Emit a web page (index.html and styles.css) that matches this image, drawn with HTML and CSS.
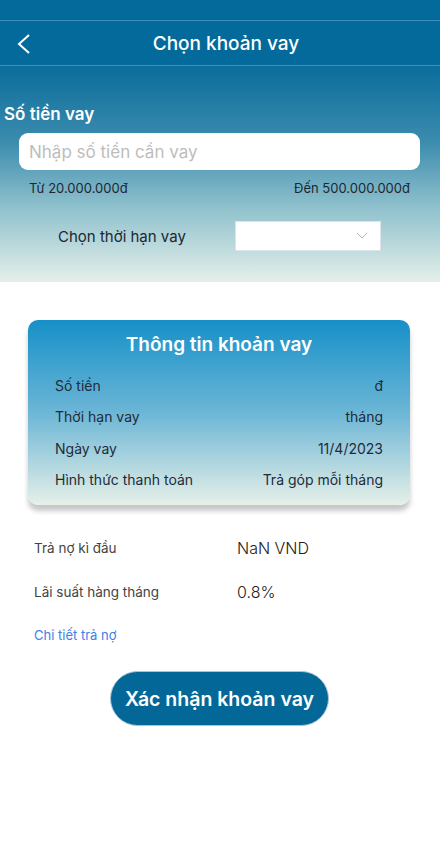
FILE: index.html
```html
<html>
  <head>
    <meta charset="utf-8">
    <link rel="stylesheet" href="styles.css">
  </head>
  <body>
    <div class="status"></div>
    <div class="header">
      <span class="back">
        <svg width="16" height="22" viewBox="0 0 16 22">
          <path d="M13 2 L3 11 L13 20" fill="none" stroke="#fff" stroke-width="2" />
        </svg>
      </span>
      <span class="title">Chọn khoản vay</span>
      <span></span>
    </div>

    <div class="top">
      <div class="label-amount">Số tiền vay</div>
      <input class="amount" type="text" placeholder="Nhập số tiền cần vay" />
      <div class="range">
        <span>Từ 20.000.000đ</span>
        <span>Đến 500.000.000đ</span>
      </div>
      <div class="term">
        <span class="term-label">Chọn thời hạn vay</span>
        <div class="term-select">
          <svg width="12" height="8" viewBox="0 0 12 8">
            <path d="M1 1 L6 6 L11 1" fill="none" stroke="#b8b8b8" stroke-width="1" />
          </svg>
        </div>
      </div>
    </div>

    <div class="card">
      <div class="card-title">Thông tin khoản vay</div>
      <div class="card-row"><span>Số tiền</span><span>đ</span></div>
      <div class="card-row"><span>Thời hạn vay</span><span>tháng</span></div>
      <div class="card-row"><span>Ngày vay</span><span>11/4/2023</span></div>
      <div class="card-row"><span>Hình thức thanh toán</span><span>Trả góp mỗi tháng</span></div>
    </div>

    <div class="summary">
      <div class="sum-row">
        <span class="sum-label">Trả nợ kì đầu</span>
        <span class="sum-value">NaN VND</span>
      </div>
      <div class="sum-row">
        <span class="sum-label">Lãi suất hàng tháng</span>
        <span class="sum-value">0.8%</span>
      </div>
      <a class="detail-link">Chi tiết trả nợ</a>
    </div>

    <div class="actions">
      <button class="confirm">Xác nhận khoản vay</button>
    </div>
  </body>
</html>
```

FILE: styles.css
```css
body {
  margin: 0;
  font-family: Inter, "Noto Sans", sans-serif;
  background: #ffffff;
  color: #222;
}

.status {
  height: 20px;
  background: #036a9b;
  border-bottom: 1px solid #3f8fbc;
}

.header {
  display: grid;
  grid-template-columns: 50px 1fr 50px;
  align-items: center;
  height: 44px;
  background: #036a9b;
  border-bottom: 1px solid #3f8fbc;
}
.back {
  display: flex;
  padding-left: 16px;
  padding-top: 2px;
}
.title {
  text-align: center;
  color: #fff;
  font-size: 19px;
  font-weight: 500;
  padding-left: 12px;
}

.top {
  height: 216px;
  box-sizing: border-box;
  padding-top: 37px;
  background: linear-gradient(180deg, #0b6c9b 0%, #3b8cae 35%, #8ec0cc 65%, #e4f0ea 100%);
}
.label-amount {
  padding-left: 4px;
  color: #fff;
  font-size: 17px;
  font-weight: 600;
  line-height: 22px;
}
.amount {
  display: block;
  box-sizing: border-box;
  margin: 8px 20px 0 19px;
  width: 401px;
  height: 37px;
  padding: 0 10px;
  border: none;
  border-radius: 9px;
  background: #fff;
  font-family: Inter, "Noto Sans", sans-serif;
  font-size: 17px;
  outline: none;
}
.amount::placeholder {
  color: #bdbdbd;
}
.range {
  display: flex;
  justify-content: space-between;
  padding: 0 30px 0 29px;
  margin-top: 10px;
  font-size: 13px;
  line-height: 16px;
  color: #1c2733;
}
.term {
  display: flex;
  align-items: center;
  margin-top: 25px;
  padding-left: 58px;
}
.term-label {
  width: 177px;
  font-size: 15px;
  color: #1c2733;
}
.term-select {
  display: flex;
  align-items: center;
  justify-content: flex-end;
  box-sizing: border-box;
  width: 146px;
  height: 30px;
  padding-right: 12px;
  background: #fff;
  border: 1px solid #dde3e8;
}

.card {
  margin: 38px 30px 0 28px;
  height: 185px;
  box-sizing: border-box;
  padding: 12px 27px 0 27px;
  border-radius: 10px;
  background: linear-gradient(180deg, #1690c8 0%, #6cb6d6 50%, #e6f0e8 100%);
  box-shadow: 0 6px 5px rgba(0, 0, 0, 0.22);
}
.card-title {
  text-align: center;
  color: #fff;
  font-size: 19px;
  font-weight: 600;
  line-height: 26px;
  margin-bottom: 12px;
}
.card-row {
  display: flex;
  justify-content: space-between;
  height: 31.3px;
  align-items: center;
  font-size: 14px;
  color: #1f2b38;
}

.summary {
  padding: 21px 0 0 34px;
}
.sum-row {
  display: flex;
  align-items: center;
  height: 44px;
}
.sum-label {
  width: 203px;
  font-size: 13.5px;
  color: #444;
}
.sum-value {
  font-size: 16px;
  font-weight: 300;
  color: #222;
}
.detail-link {
  display: block;
  margin-top: 13px;
  font-size: 13px;
  line-height: 16px;
  color: #3b82e8;
}

.actions {
  display: flex;
  padding-left: 110px;
  margin-top: 28px;
}
.confirm {
  width: 219px;
  height: 55px;
  border: 1px solid #a9c6d6;
  border-radius: 28px;
  background: #036897;
  color: #fff;
  font-family: Inter, "Noto Sans", sans-serif;
  font-size: 19.5px;
  font-weight: 600;
}
```
